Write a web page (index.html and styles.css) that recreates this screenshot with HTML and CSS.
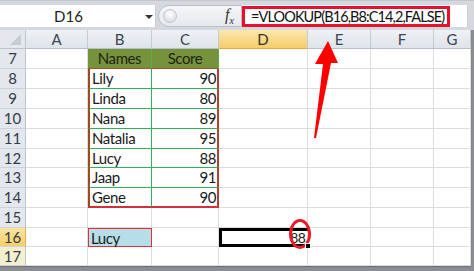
FILE: index.html
```html
<!DOCTYPE html>
<html lang="en">
<head>
    <meta charset="UTF-8">
    <title>VLOOKUP example</title>
    <link rel="stylesheet" href="styles.css">
</head>
<body>
    <div class="window">
        <div class="formula-bar">
            <div class="name-box">
                <span class="cell-ref">D16</span>
                <span class="drop-arrow"></span>
            </div>
            <div class="fx-box">
                <span class="splitter"></span>
                <span class="fx"><i>f</i><sub>x</sub></span>
            </div>
            <div class="formula-input">
                <div class="formula-text">=VLOOKUP(B16,B8:C14,2,FALSE)</div>
            </div>
        </div>

        <div class="sheet">
            <div class="corner"><span class="select-all"></span></div>
            <div class="col-head">A</div>
            <div class="col-head">B</div>
            <div class="col-head">C</div>
            <div class="col-head active">D</div>
            <div class="col-head">E</div>
            <div class="col-head">F</div>
            <div class="col-head">G</div>

            <div class="row-head">7</div>
            <div class="cell"></div>
            <div class="cell tbl-head">Names</div>
            <div class="cell tbl-head">Score</div>
            <div class="cell"></div><div class="cell"></div><div class="cell"></div><div class="cell"></div>

            <div class="row-head">8</div>
            <div class="cell"></div>
            <div class="cell tb-name">Lily</div>
            <div class="cell tb-score">90</div>
            <div class="cell"></div><div class="cell"></div><div class="cell"></div><div class="cell"></div>

            <div class="row-head">9</div>
            <div class="cell"></div>
            <div class="cell tb-name">Linda</div>
            <div class="cell tb-score">80</div>
            <div class="cell"></div><div class="cell"></div><div class="cell"></div><div class="cell"></div>

            <div class="row-head">10</div>
            <div class="cell"></div>
            <div class="cell tb-name">Nana</div>
            <div class="cell tb-score">89</div>
            <div class="cell"></div><div class="cell"></div><div class="cell"></div><div class="cell"></div>

            <div class="row-head">11</div>
            <div class="cell"></div>
            <div class="cell tb-name">Natalia</div>
            <div class="cell tb-score">95</div>
            <div class="cell"></div><div class="cell"></div><div class="cell"></div><div class="cell"></div>

            <div class="row-head">12</div>
            <div class="cell"></div>
            <div class="cell tb-name">Lucy</div>
            <div class="cell tb-score">88</div>
            <div class="cell"></div><div class="cell"></div><div class="cell"></div><div class="cell"></div>

            <div class="row-head">13</div>
            <div class="cell"></div>
            <div class="cell tb-name">Jaap</div>
            <div class="cell tb-score">91</div>
            <div class="cell"></div><div class="cell"></div><div class="cell"></div><div class="cell"></div>

            <div class="row-head">14</div>
            <div class="cell"></div>
            <div class="cell tb-name last">Gene</div>
            <div class="cell tb-score last">90</div>
            <div class="cell"></div><div class="cell"></div><div class="cell"></div><div class="cell"></div>

            <div class="row-head">15</div>
            <div class="cell"></div><div class="cell"></div><div class="cell"></div>
            <div class="cell"></div><div class="cell"></div><div class="cell"></div><div class="cell"></div>

            <div class="row-head active">16</div>
            <div class="cell"></div>
            <div class="cell lookup">Lucy</div>
            <div class="cell"></div>
            <div class="cell selected">
                88
                <span class="circle"></span>
                <span class="fill-handle"></span>
            </div>
            <div class="cell"></div><div class="cell"></div><div class="cell"></div>

            <div class="row-head soft">17</div>
            <div class="cell"></div><div class="cell"></div><div class="cell"></div>
            <div class="cell"></div><div class="cell"></div><div class="cell"></div><div class="cell"></div>
        </div>

        <!-- annotation arrow pointing at the formula -->
        <svg class="arrow" width="40" height="104" viewBox="0 0 40 104">
            <polygon points="15,0 25,22 18,22 3,97 1,97 10,23 2,23" fill="#f00"/>
        </svg>
    </div>
</body>
</html>
```

FILE: styles.css
```css
* {
    margin: 0;
    padding: 0;
    box-sizing: border-box;
}

body {
    font-family: Lato, "Open Sans", sans-serif;
    background: #fff;
}

.window {
    position: relative;
    width: 474px;
    height: 271px;
    overflow: hidden;
    background: #8a8d91;
}

/* formula bar */
.formula-bar {
    display: flex;
    height: 30px;
    padding-top: 4px;
    padding-bottom: 3px;
    background: #d5d9df;
    border-top: 1px solid #c3c7cc;
}

.name-box {
    position: relative;
    flex-shrink: 0;
    width: 156px;
    background: #fff;
    display: flex;
    align-items: center;
    justify-content: center;
    border-right: 1px solid #c9ced5;
}

.cell-ref {
    font-size: 15px;
    color: #222;
    margin-left: -18px;
}

.drop-arrow {
    position: absolute;
    left: 145px;
    top: 10px;
    border-left: 4px solid transparent;
    border-right: 4px solid transparent;
    border-top: 4px solid #333;
}

.fx-box {
    flex-shrink: 0;
    width: 84px;
    margin-left: 2px;
    background: linear-gradient(#f3f5f8, #e6e9ee);
    border: 1px solid #b9bfc7;
    border-radius: 11px 0 0 11px;
    display: flex;
    align-items: center;
    justify-content: space-between;
    padding: 0 7px 0 4px;
}

.splitter {
    width: 14px;
    height: 14px;
    border-radius: 50%;
    background: radial-gradient(circle at 50% 35%, #fff, #cfd4da);
    border: 1px solid #c2c7ce;
}

.fx {
    font-family: "Liberation Serif", serif;
    font-size: 16px;
    color: #333;
}

.fx sub {
    font-size: 10px;
    font-style: italic;
}

.formula-input {
    flex: 1;
    min-width: 0;
    background: #fff;
    padding: 1px 17px 0 0;
    margin-right: 6px;
    border-right: 1px solid #c9ced5;
}

.formula-text {
    height: 21px;
    border: 3px solid #e8102a;
    font-size: 14.5px;
    letter-spacing: -0.9px;
    line-height: 15px;
    color: #111;
    padding-left: 6px;
    white-space: nowrap;
}

/* grid */
.sheet {
    display: grid;
    grid-template-columns: 26px 62px 64px 67px 89px 63px 63px 37px;
    grid-template-rows: 19px 20px 20px 20px 20px 20px 19px 20px 20px 20px 19px 19px;
    background: #fff;
    width: 471px;
    box-shadow: 0 1px 1px #6f7276;
}

.corner {
    position: relative;
    background: #e4e8ee;
    border-right: 1px solid #bfc5cd;
    border-bottom: 1px solid #bfc5cd;
}

.select-all {
    position: absolute;
    right: 4px;
    bottom: 3px;
    border-left: 11px solid transparent;
    border-bottom: 11px solid #c7ccd3;
}

.col-head {
    background: linear-gradient(#eef1f5, #dfe4ea);
    border-right: 1px solid #c5cbd3;
    border-bottom: 1px solid #b9c0c9;
    font-size: 15px;
    color: #3c4552;
    text-align: center;
    line-height: 18px;
}

.col-head.active {
    background: linear-gradient(#fbe8ad, #f6cc6a);
    border-bottom: 1px solid #e5a93a;
    color: #3a3020;
}

.row-head {
    background: #e4e8ee;
    border-right: 1px solid #bfc5cd;
    border-bottom: 1px solid #cdd2d9;
    font-size: 15px;
    color: #333b47;
    text-align: center;
    line-height: 19px;
}

.row-head.active {
    background: linear-gradient(#fbe3a0, #f5cf6c);
    border-right: 1px solid #e2b04a;
}

.row-head.soft {
    background: #f6efcf;
}

.cell {
    border-right: 1px solid #dadcdf;
    border-bottom: 1px solid #dadcdf;
    font-size: 15px;
    letter-spacing: -0.4px;
    line-height: 19px;
    color: #1a1a1a;
    padding: 0 3px;
    white-space: nowrap;
}

.tbl-head {
    background: #76923c;
    border-right-color: #5fae4a;
    border-bottom-color: #a0522d;
    text-align: center;
    color: #1e2410;
}

.tb-name {
    border-left: 2px solid #9c4a1e;
    border-right: 1px solid #2cb35a;
    border-bottom: 1px solid #2cb35a;
    padding-left: 2px;
}

.tb-score {
    border-right: 2px solid #b6402b;
    border-bottom: 1px solid #2cb35a;
    text-align: right;
    padding-right: 1px;
}

.cell.last {
    border-bottom: 2px solid #d2303a;
}

.lookup {
    background: #b7dde8;
    border: 1px solid #e0303a;
    padding-left: 2px;
}

.selected {
    position: relative;
    border: 3px solid #000;
    border-right: 0;
    text-align: right;
    padding-right: 3px;
    font-size: 14px;
    letter-spacing: -0.8px;
    line-height: 14px;
    color: #222;
}

.circle {
    position: absolute;
    right: -3px;
    top: -12px;
    width: 22px;
    height: 30px;
    border: 3px solid #ec1c24;
    border-radius: 50%;
}

.fill-handle {
    position: absolute;
    right: -3px;
    bottom: -5px;
    width: 6px;
    height: 6px;
    background: #000;
    border: 1px solid #fff;
}

.arrow {
    position: absolute;
    left: 313px;
    top: 41px;
}
```
